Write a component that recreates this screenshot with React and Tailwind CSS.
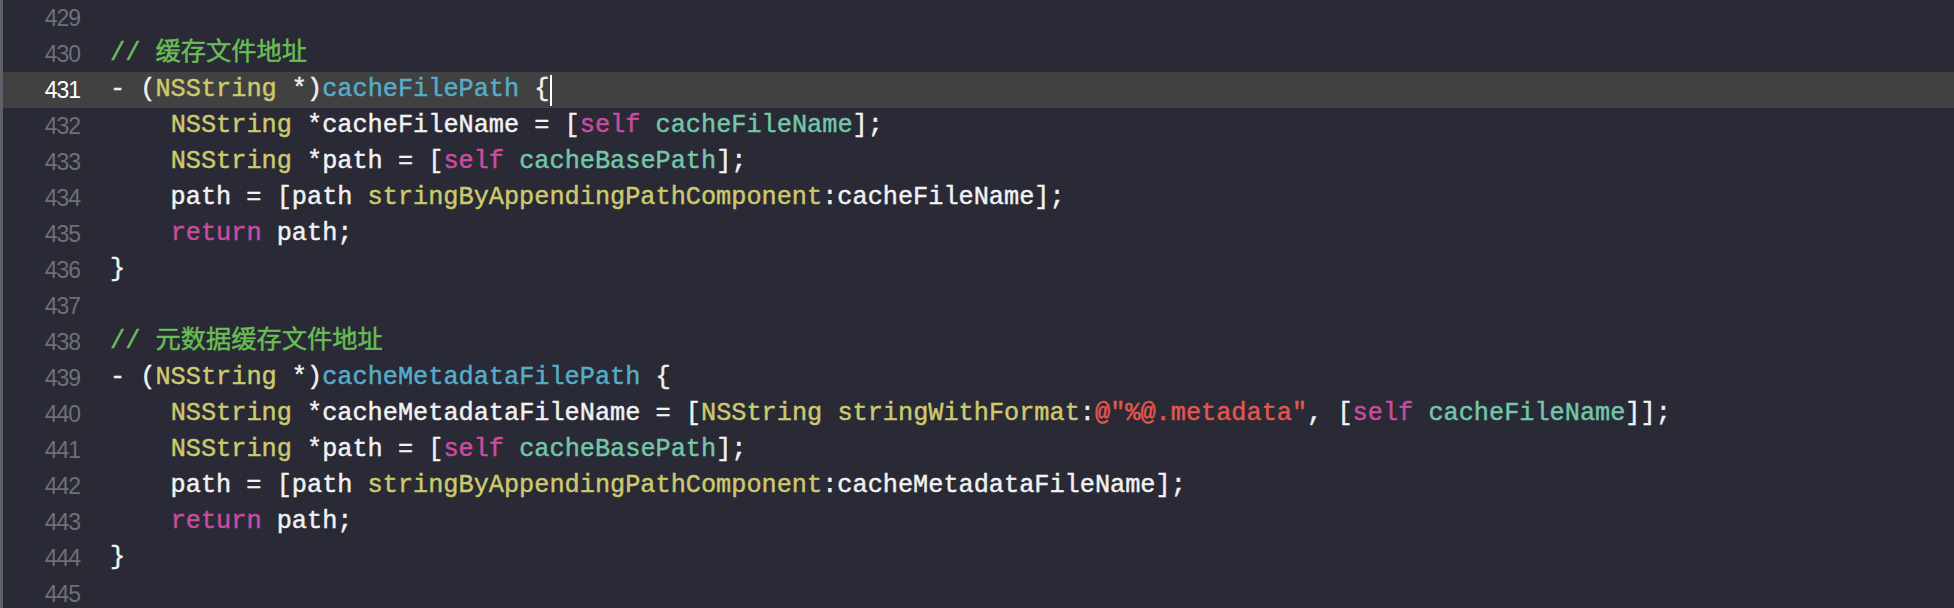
import React from "react";

const C = {
  plain: "text-[#f2f2f2]",
  comment: "text-[#69bd55]",
  type: "text-[#cdc96d]",
  decl: "text-[#56acc9]",
  method: "text-[#72c7a9]",
  kw: "text-[#c94ca0]",
  str: "text-[#e3574e]",
};

const lines = [
  { n: 429, t: [] },
  { n: 430, t: [["comment", "// 缓存文件地址"]] },
  {
    n: 431,
    current: true,
    t: [
      ["plain", "- ("],
      ["type", "NSString"],
      ["plain", " *)"],
      ["decl", "cacheFilePath"],
      ["plain", " {"],
    ],
  },
  {
    n: 432,
    t: [
      ["plain", "    "],
      ["type", "NSString"],
      ["plain", " *cacheFileName = ["],
      ["kw", "self"],
      ["plain", " "],
      ["method", "cacheFileName"],
      ["plain", "];"],
    ],
  },
  {
    n: 433,
    t: [
      ["plain", "    "],
      ["type", "NSString"],
      ["plain", " *path = ["],
      ["kw", "self"],
      ["plain", " "],
      ["method", "cacheBasePath"],
      ["plain", "];"],
    ],
  },
  {
    n: 434,
    t: [
      ["plain", "    path = [path "],
      ["type", "stringByAppendingPathComponent"],
      ["plain", ":cacheFileName];"],
    ],
  },
  { n: 435, t: [["plain", "    "], ["kw", "return"], ["plain", " path;"]] },
  { n: 436, t: [["plain", "}"]] },
  { n: 437, t: [] },
  { n: 438, t: [["comment", "// 元数据缓存文件地址"]] },
  {
    n: 439,
    t: [
      ["plain", "- ("],
      ["type", "NSString"],
      ["plain", " *)"],
      ["decl", "cacheMetadataFilePath"],
      ["plain", " {"],
    ],
  },
  {
    n: 440,
    t: [
      ["plain", "    "],
      ["type", "NSString"],
      ["plain", " *cacheMetadataFileName = ["],
      ["type", "NSString"],
      ["plain", " "],
      ["type", "stringWithFormat"],
      ["plain", ":"],
      ["str", '@"%@.metadata"'],
      ["plain", ", ["],
      ["kw", "self"],
      ["plain", " "],
      ["method", "cacheFileName"],
      ["plain", "]];"],
    ],
  },
  {
    n: 441,
    t: [
      ["plain", "    "],
      ["type", "NSString"],
      ["plain", " *path = ["],
      ["kw", "self"],
      ["plain", " "],
      ["method", "cacheBasePath"],
      ["plain", "];"],
    ],
  },
  {
    n: 442,
    t: [
      ["plain", "    path = [path "],
      ["type", "stringByAppendingPathComponent"],
      ["plain", ":cacheMetadataFileName];"],
    ],
  },
  { n: 443, t: [["plain", "    "], ["kw", "return"], ["plain", " path;"]] },
  { n: 444, t: [["plain", "}"]] },
  { n: 445, t: [] },
];

function Line({ line }) {
  return (
    <div
      className={
        "flex h-[36px] shrink-0 items-center " +
        (line.current ? "bg-[#414141]" : "")
      }
    >
      <div
        className={
          "w-[77px] shrink-0 text-right text-[23px] tracking-[-1px] " +
          (line.current ? "text-white" : "text-[#6e707a]")
        }
        style={{ fontFamily: '"Liberation Sans", sans-serif' }}
      >
        {line.n}
      </div>
      <div
        className="flex items-center whitespace-pre pl-[30px] text-[25.25px] [-webkit-text-stroke:0.45px_currentColor]"
        style={{
          fontFamily: '"Liberation Mono", "Noto Sans CJK SC", monospace',
        }}
      >
        {line.t.map(([kind, text], i) => (
          <span key={i} className={C[kind]}>
            {text}
          </span>
        ))}
        {line.current && (
          <span className="ml-[1px] inline-block h-[31px] w-[2px] bg-white" />
        )}
      </div>
    </div>
  );
}

export default function App() {
  return (
    <div className="flex h-[608px] w-[1954px] overflow-hidden bg-[#292a36]">
      <div className="w-[3px] shrink-0 bg-[#5f616b]" />
      <div className="flex flex-1 flex-col">
        {lines.map((l) => (
          <Line key={l.n} line={l} />
        ))}
      </div>
    </div>
  );
}
